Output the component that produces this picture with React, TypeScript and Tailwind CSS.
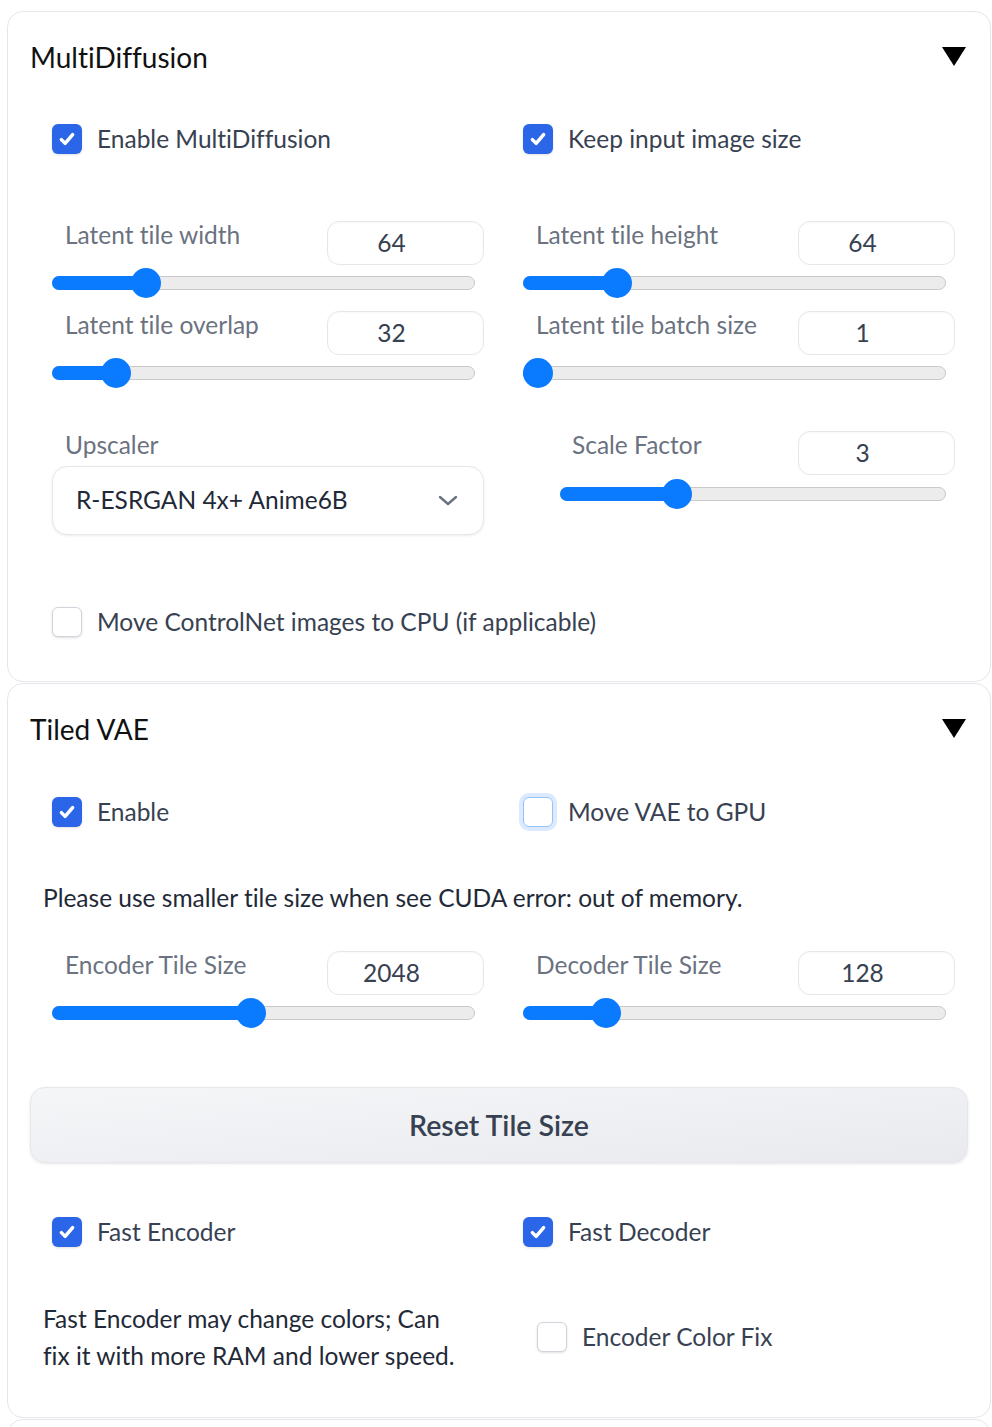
import React from 'react';

const font = { fontFamily: '"Source Sans Pro", Lato, "Noto Sans", sans-serif' };

function Check({ checked, focus }: { checked?: boolean; focus?: boolean }) {
  if (checked) {
    return (
      <div className="w-[30px] h-[30px] shrink-0 rounded-[6px] bg-[#2b66e8] flex items-center justify-center shadow-sm">
        <svg width="20" height="20" viewBox="0 0 16 16" fill="none">
          <path d="M3.5 8.5l3 3 6-7" stroke="white" strokeWidth="2.8" strokeLinecap="round" strokeLinejoin="round" />
        </svg>
      </div>
    );
  }
  return (
    <div
      className={
        focus
          ? 'w-[30px] h-[30px] shrink-0 rounded-[6px] bg-white border border-[#93c5fd] ring-4 ring-[#dbeafe]'
          : 'w-[30px] h-[30px] shrink-0 rounded-[6px] bg-white border border-[#d1d5db] shadow-sm'
      }
    />
  );
}

function CheckRow({ label, checked, focus }: { label: string; checked?: boolean; focus?: boolean }) {
  return (
    <div className="flex items-center gap-[15px] h-[30px]">
      <Check checked={checked} focus={focus} />
      <span className="text-[24.5px] text-[#374151] leading-none">{label}</span>
    </div>
  );
}

function Track({ frac }: { frac: number }) {
  return (
    <div className="relative h-[14px] rounded-full bg-[#ececec] border border-[#c9c9c9]">
      <div
        className="absolute left-[-1px] top-[-1px] h-[14px] rounded-full bg-[#0a7aff]"
        style={{ width: `calc(${frac} * (100% - 28px) + 16px)` }}
      />
      <div
        className="absolute top-[-9px] w-[30px] h-[30px] rounded-full bg-[#0a7aff]"
        style={{ left: `calc(${frac} * (100% - 28px) - 1px)` }}
      />
    </div>
  );
}

function NumBox({ value }: { value: string }) {
  return (
    <div className="w-[157px] h-[44px] rounded-[12px] border border-[#e5e7eb] bg-white flex items-center justify-center pr-[28px] text-[24.5px] text-[#374151] shadow-[inset_0_1px_2px_rgba(0,0,0,0.03)]">
      {value}
    </div>
  );
}

function SliderBlock({ label, value, frac }: { label: string; value: string; frac: number }) {
  return (
    <div className="w-[432px] h-[90px]">
      <div className="flex justify-between items-start h-[44px]">
        <span className="pl-[13px] text-[24.5px] leading-[28px] text-[#6b7280]">{label}</span>
        <NumBox value={value} />
      </div>
      <div className="mt-[11px] mr-[9px]">
        <Track frac={frac} />
      </div>
    </div>
  );
}

function Triangle() {
  return (
    <svg width="24" height="20" viewBox="0 0 24 20">
      <polygon points="0,0 24,0 12,19" fill="#000" />
    </svg>
  );
}

function PanelHead({ title }: { title: string }) {
  return (
    <div className="h-[92px] pb-[3px] flex items-center justify-between pl-[22px] pr-[24px]">
      <span className="text-[28px] text-[#111111]">{title}</span>
      <Triangle />
    </div>
  );
}

export default function App() {
  return (
    <div className="bg-white min-h-[1427px] pt-[11px] overflow-hidden [font-variant-ligatures:none]" style={font}>
      {/* MultiDiffusion */}
      <div className="ml-[7px] w-[984px] h-[671px] border border-[#e5e7eb] rounded-[16px]">
        <PanelHead title="MultiDiffusion" />
        <div className="pl-[44px]">
          <div className="mt-[20px] grid grid-cols-[471px_471px]">
            <CheckRow label="Enable MultiDiffusion" checked />
            <CheckRow label="Keep input image size" checked />
          </div>
          <div className="mt-[67px] grid grid-cols-[471px_471px]">
            <div>
              <SliderBlock label="Latent tile width" value="64" frac={0.2} />
              <SliderBlock label="Latent tile overlap" value="32" frac={0.125} />
            </div>
            <div>
              <SliderBlock label="Latent tile height" value="64" frac={0.2} />
              <SliderBlock label="Latent tile batch size" value="1" frac={0} />
            </div>
          </div>
          <div className="mt-[30px] grid grid-cols-[471px_471px]">
            <div className="w-[432px]">
              <div className="pl-[13px] text-[24.5px] leading-[28px] text-[#6b7280]">Upscaler</div>
              <div className="mt-[7px] h-[69px] rounded-[15px] border border-[#e5e7eb] bg-white shadow-[0_1px_3px_rgba(0,0,0,0.08)] flex items-center justify-between pl-[23px] pr-[24px]">
                <span className="text-[24.5px] text-[#1f2937]">R-ESRGAN 4x+ Anime6B</span>
                <svg width="22" height="14" viewBox="0 0 22 14" fill="none">
                  <path d="M3 3l8 7 8-7" stroke="#6b7280" strokeWidth="2.4" strokeLinecap="round" strokeLinejoin="round" />
                </svg>
              </div>
            </div>
            <div className="pl-[37px] w-[432px]">
              <div className="flex justify-between items-start h-[44px]">
                <span className="pl-[12px] text-[24.5px] leading-[28px] text-[#6b7280]">Scale Factor</span>
                <NumBox value="3" />
              </div>
              <div className="mt-[12px] mr-[9px]">
                <Track frac={0.286} />
              </div>
            </div>
          </div>
          <div className="mt-[72px]">
            <CheckRow label="Move ControlNet images to CPU (if applicable)" />
          </div>
        </div>
      </div>

      {/* Tiled VAE */}
      <div className="mt-[1px] ml-[7px] w-[984px] h-[735px] border border-[#e5e7eb] rounded-[16px]">
        <PanelHead title="Tiled VAE" />
        <div className="pl-[44px]">
          <div className="mt-[21px] grid grid-cols-[471px_471px]">
            <CheckRow label="Enable" checked />
            <CheckRow label="Move VAE to GPU" focus />
          </div>
          <div className="mt-[52px] -ml-[9px] text-[24.5px] leading-[37px] text-[#1f2937]">
            Please use smaller tile size when see CUDA error: out of memory.
          </div>
          <div className="mt-[35px] grid grid-cols-[471px_471px]">
            <SliderBlock label="Encoder Tile Size" value="2048" frac={0.467} />
            <SliderBlock label="Decoder Tile Size" value="128" frac={0.172} />
          </div>
        </div>
        <div className="px-[22px]">
          <div className="mt-[46px] h-[76px] rounded-[15px] border border-[#e5e7eb] bg-gradient-to-br from-[#f5f6f8] to-[#e8eaee] shadow-[0_1px_3px_rgba(0,0,0,0.1)] flex items-center justify-center">
            <span className="text-[28.5px] font-semibold text-[#374151]">Reset Tile Size</span>
          </div>
        </div>
        <div className="pl-[44px]">
          <div className="mt-[54px] grid grid-cols-[471px_471px]">
            <CheckRow label="Fast Encoder" checked />
            <CheckRow label="Fast Decoder" checked />
          </div>
          <div className="mt-[53px] grid grid-cols-[485px_457px] items-center">
            <div className="-ml-[9px] text-[24.5px] leading-[37px] text-[#1f2937]">
              Fast Encoder may change colors; Can
              <br />
              fix it with more RAM and lower speed.
            </div>
            <CheckRow label="Encoder Color Fix" />
          </div>
        </div>
      </div>

      <div className="mt-[1px] ml-[7px] w-[984px] h-[40px] border border-[#e5e7eb] rounded-t-[16px]" />
    </div>
  );
}
